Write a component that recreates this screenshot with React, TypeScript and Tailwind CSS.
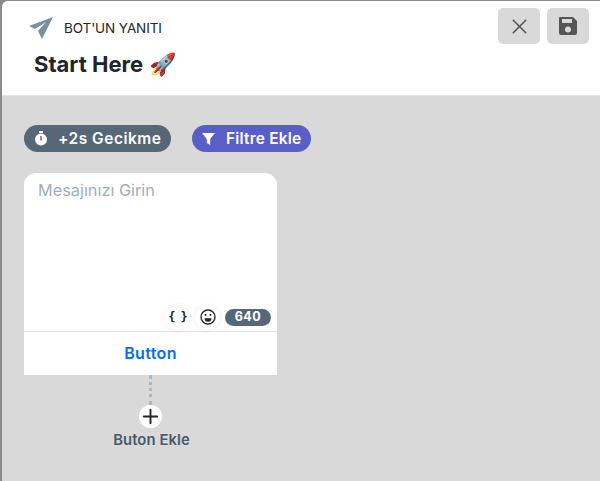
import { X, Plus } from "lucide-react"

function Pill({ color, icon, label, width, gap, tracking }: { color: string; icon: React.ReactNode; label: string; width: string; gap: string; tracking: string }) {
    return (
        <div className={`flex h-[27px] items-center rounded-full pl-[10px] text-[15.5px] font-semibold text-white ${tracking} ${color} ${width}`}>
            {icon}
            <span className={gap}>{label}</span>
        </div>
    )
}

export default function App() {
    return (
        <div className="h-[481px] w-[600px] overflow-hidden bg-[#8b8b8f] pt-px pl-[2px] font-['Inter',sans-serif]">
            <div className="h-full overflow-hidden rounded-tl-[6px] bg-[#d9d9d9]">
                <header className="flex h-[95px] justify-between border-b border-[#e5e5e5] bg-white pr-[11px] pl-[27px]">
                    <div>
                        <div className="mt-[15px] flex h-[24px] items-center">
                            <svg width="24" height="23" viewBox="0 0 24 23" className="shrink-0">
                                <path d="M0 9 24 0 13 22 9 14 17 5 6 12Z" fill="#7d8f9f" />
                            </svg>
                            <span className="ml-[11px] text-[13.5px] font-normal tracking-[-0.1px] text-[#212529]">BOT'UN YANITI</span>
                        </div>
                        <h1 className="mt-[8px] ml-[5px] flex items-center text-[22px] font-bold text-[#212529]">
                            Start Here
                            <span className="ml-[6px] text-[22px] leading-none font-['Noto_Color_Emoji',sans-serif]">🚀</span>
                        </h1>
                    </div>
                    <div className="mt-[7px] flex gap-[7px]">
                        <button className="flex h-[36px] w-[42px] items-center justify-center rounded-[5px] bg-[#d9d9d9]">
                            <X size={25} strokeWidth={1.5} color="#555" />
                        </button>
                        <button className="flex h-[36px] w-[42px] items-center justify-center rounded-[5px] bg-[#d9d9d9]">
                            <svg width="20" height="20" viewBox="0 0 20 20">
                                <path fillRule="evenodd" fill="#555" d="M2 1h13l4 4v12a2 2 0 0 1-2 2H3a2 2 0 0 1-2-2V2a1 1 0 0 1 1-1ZM4 3v4h10V3ZM10 10.5a3 3 0 1 0 0 6 3 3 0 0 0 0-6Z" />
                            </svg>
                        </button>
                    </div>
                </header>
                <main className="pt-[29px] pl-[22px]">
                    <div className="flex gap-[21px]">
                        <Pill
                            color="bg-[#566778]"
                            width="w-[147px]"
                            label="+2s Gecikme"
                            gap="ml-[10px]"
                            tracking="tracking-[0.5px]"
                            icon={
                                <svg width="14" height="15" viewBox="0 0 14 15" fill="white">
                                    <rect x="5" y="0" width="4" height="2" />
                                    <path fillRule="evenodd" d="M7 2.5a6 6 0 1 0 0 12 6 6 0 0 0 0-12ZM6.3 5h1.4v4.5H6.3Z" />
                                </svg>
                            }
                        />
                        <Pill
                            color="bg-[#5a5fc8]"
                            width="w-[119px]"
                            label="Filtre Ekle"
                            gap="ml-[11px]"
                            tracking="tracking-[0.2px]"
                            icon={
                                <svg width="13" height="12" viewBox="0 0 13 12" fill="white">
                                    <path d="M0 0h13L8.2 6v6L4.8 10V6Z" />
                                </svg>
                            }
                        />
                    </div>
                    <div className="mt-[21px] w-[253px] overflow-hidden rounded-t-[12px] bg-white">
                        <div className="h-[158px] px-[14px] pt-[5px] text-[16.3px] text-[#a3adb7]">
                            Mesajınızı Girin
                        </div>
                        <div className="-mt-[28px] flex h-[28px] items-center justify-end pr-[6px]">
                            <div className="flex h-[25px] w-[25px] items-center justify-center rounded-full bg-white font-['DejaVu_Sans_Mono',monospace] text-[12px] font-bold tracking-[-1px] text-[#212529] shadow-[0_0_4px_rgba(0,0,0,0.08)]">
                                {"{ }"}
                            </div>
                            <div className="ml-[5px] flex h-[25px] w-[25px] items-center justify-center rounded-full bg-white shadow-[0_0_4px_rgba(0,0,0,0.08)]">
                                <svg width="16" height="16" viewBox="0 0 16 16" fill="none">
                                    <circle cx="8" cy="8" r="7" stroke="#212529" strokeWidth="1.3" />
                                    <circle cx="5.5" cy="6" r="1" fill="#212529" />
                                    <circle cx="10.5" cy="6" r="1" fill="#212529" />
                                    <path d="M4.5 9.3h7a3.5 3.5 0 0 1-7 0Z" fill="#212529" />
                                </svg>
                            </div>
                            <div className="ml-[5px] flex h-[17px] w-[46px] items-center justify-center rounded-full bg-[#566778] text-[12.5px] font-bold tracking-[0.5px] text-white">
                                640
                            </div>
                        </div>
                        <div className="flex h-[44px] items-center justify-center border-t border-[#e3e3e3] pb-[2px] text-[16px] font-semibold tracking-[0.35px] text-[#0a6cf5]">
                            Button
                        </div>
                    </div>
                    <div className="flex w-[253px] flex-col items-center">
                        <div className="h-[30px] border-l-[3px] border-dotted border-[#a9b8c2]"></div>
                        <div className="flex h-[23px] w-[23px] items-center justify-center rounded-full bg-white">
                            <Plus size={23} strokeWidth={2} color="#212529" />
                        </div>
                        <span className="mt-[1px] ml-[2px] text-[14.8px] font-semibold tracking-[0.1px] text-[#47596e]">Buton Ekle</span>
                    </div>
                </main>
            </div>
        </div>
    )
}
